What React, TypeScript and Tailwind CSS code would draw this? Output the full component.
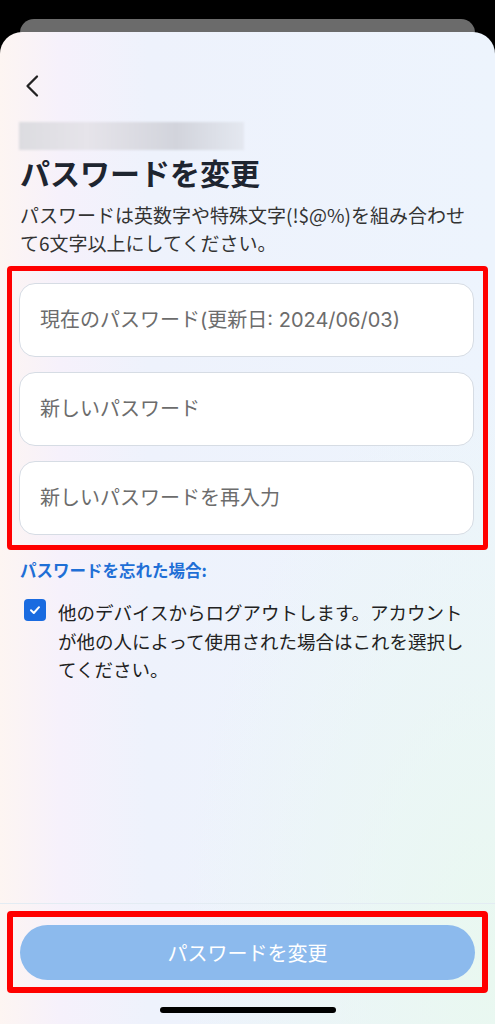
import React from "react";

const font = { fontFamily: '"Noto Sans CJK JP", "Noto Sans", sans-serif' };

function Field({ placeholder }: { placeholder: string }) {
  return (
    <input
      type="password"
      placeholder={placeholder}
      className="h-[74px] w-full rounded-[16px] border border-[#d6dce4] bg-white px-[20px] font-[Inter,'Noto_Sans_CJK_JP',sans-serif] text-[20px] outline-none placeholder:text-[#6c6c6c]"
    />
  );
}

export default function App() {
  return (
    <div className="flex h-[1024px] w-[495px] flex-col overflow-hidden bg-black" style={font}>
      <div className="mx-[20px] mt-[19px] h-[20px] shrink-0 rounded-t-[14px] bg-[#6b6b6b]" />
      <div className="relative -mt-[7px] flex flex-1 flex-col rounded-t-[22px] bg-[radial-gradient(ellipse_at_100%_95%,#e9f8f0_0%,rgba(233,248,240,0)_45%),linear-gradient(to_right,#fdf5f2_0%,#f6f1fb_12%,#eef2fc_30%,#edf4fd_100%)]">
        <div className="flex flex-1 flex-col px-5 pt-[32px]">
          <div className="flex h-[44px] items-center">
            <svg width="16" height="24" viewBox="0 0 16 24" className="ml-[4px]" fill="none">
              <path d="M13 2.5 L3.5 12 L13 21.5" stroke="#222" strokeWidth="2.3" strokeLinecap="round" strokeLinejoin="round" />
            </svg>
          </div>

          <div className="mt-[14px] h-[28px] w-[225px] -ml-px bg-[linear-gradient(to_right,#dcdce0,#e6e4ea_30%,#d2d4dc_70%,#e4e8f0)] blur-[1px]" />

          <h1 className="mt-[4px] text-[30px] font-bold leading-[36px] text-[#1e2530]">パスワードを変更</h1>

          <p className="mt-[11px] text-[19px] leading-[28px] text-[#333]">
            パスワードは英数字や特殊文字(!$@%)を組み合わせて6文字以上にしてください。
          </p>

          <div className="-mx-[13px] mt-[9px] flex flex-col gap-[15px] rounded-[4px] border-[5px] border-[#ff0000] pb-[10px] pl-[7px] pr-[9px] pt-[12px]">
            <Field placeholder="現在のパスワード(更新日: 2024/06/03)" />
            <Field placeholder="新しいパスワード" />
            <Field placeholder="新しいパスワードを再入力" />
          </div>

          <a className="mt-[9px] text-[16.5px] font-bold leading-[22px] text-[#1f6fd6]">パスワードを忘れた場合:</a>

          <div className="mt-[18px] flex items-start gap-[12px] pl-[4px]">
            <div className="flex h-[22px] w-[22px] shrink-0 items-center justify-center rounded-[4px] bg-[#1a6be0]">
              <svg width="14" height="14" viewBox="0 0 14 14" fill="none">
                <path d="M3 7.3 L5.8 10 L11 4.2" stroke="white" strokeWidth="2" strokeLinecap="round" strokeLinejoin="round" />
              </svg>
            </div>
            <p className="-mt-[1px] flex-1 text-[18.5px] leading-[28.5px] text-[#222]">
              他のデバイスからログアウトします。アカウントが他の人によって使用された場合はこれを選択してください。
            </p>
          </div>
        </div>

        <div className="border-t border-[#e3ecf3] pt-[7px]">
          <div className="mx-[7px] rounded-[4px] border-[6px] border-[#ff0000] px-[7px] pb-[7px] pt-[8px]">
            <button className="flex h-[55px] w-full items-center justify-center rounded-full bg-[#8cbaed] text-[20px] text-white">
              パスワードを変更
            </button>
          </div>
          <div className="flex justify-center pb-[11px] pt-[14px]">
            <div className="h-[6px] w-[176px] rounded-full bg-black" />
          </div>
        </div>
      </div>
    </div>
  );
}
